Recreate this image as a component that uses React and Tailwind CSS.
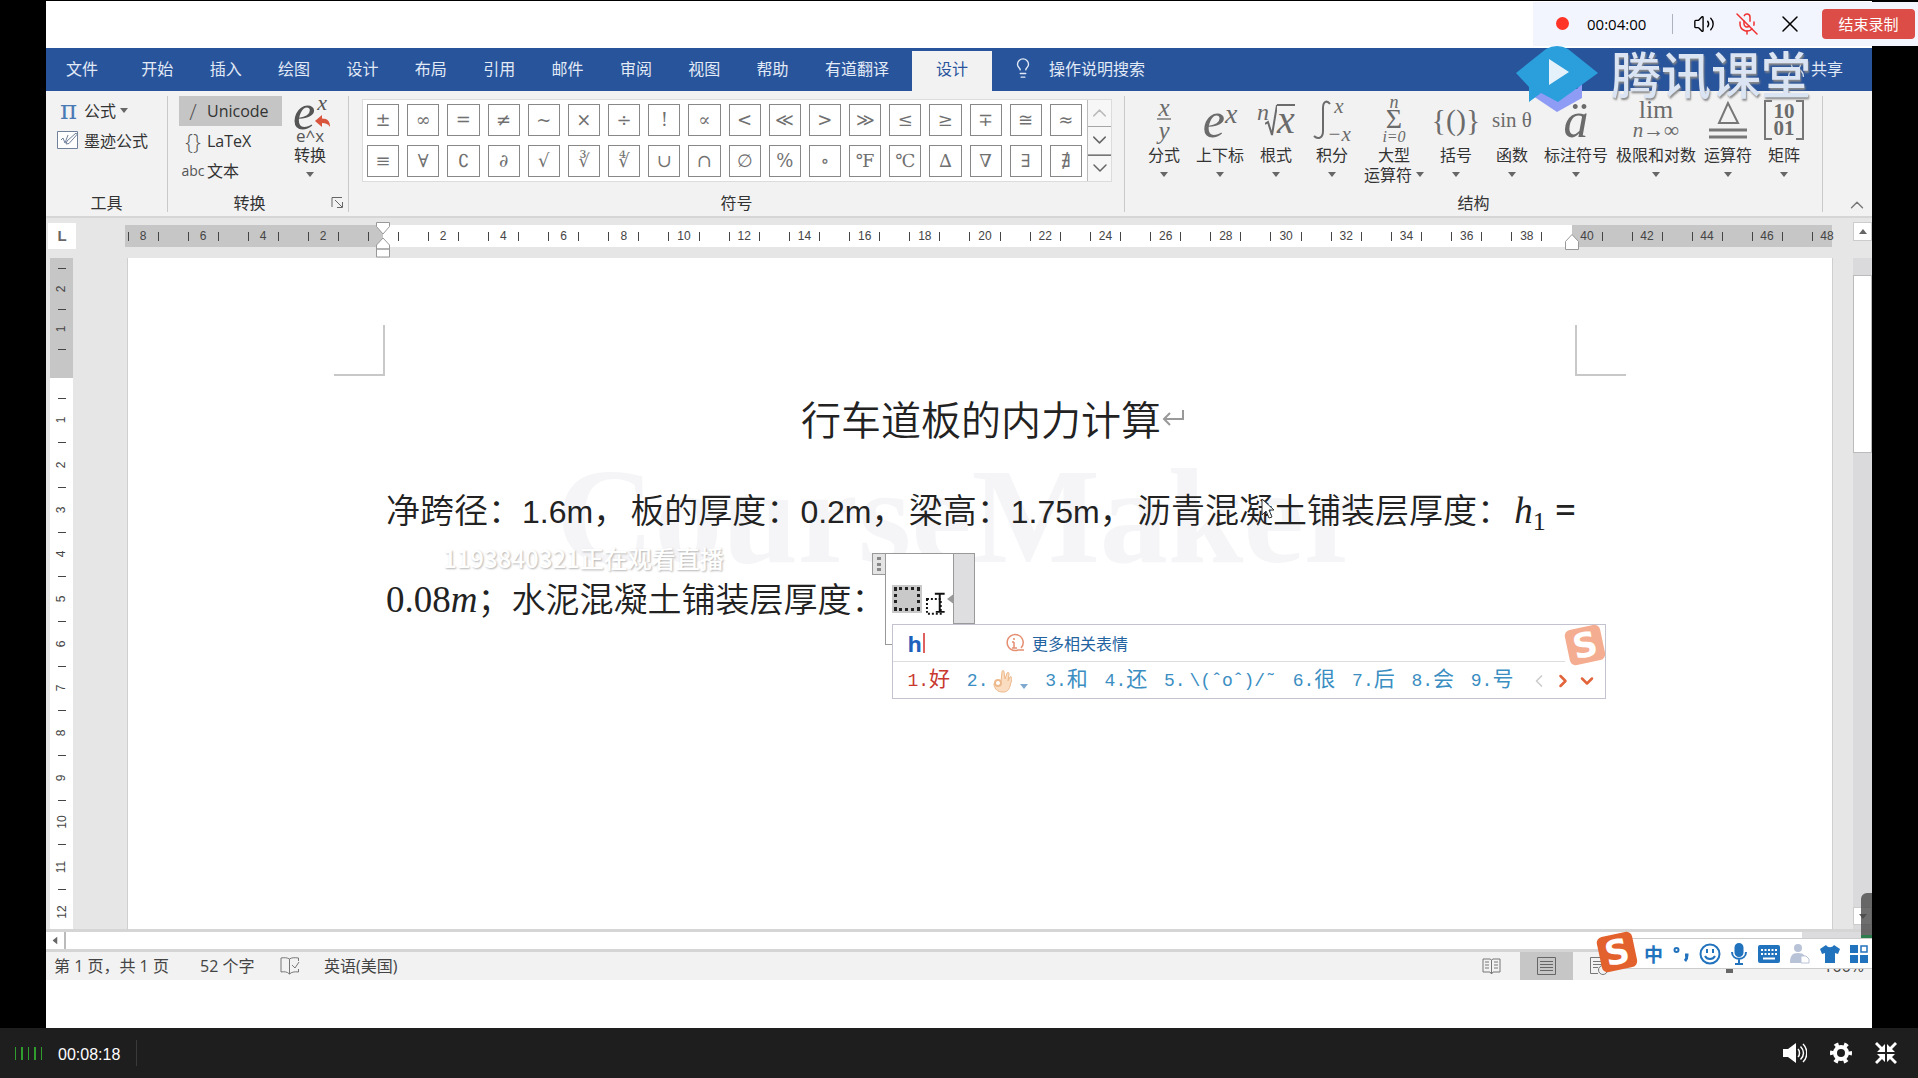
import { useState } from 'react';
import { ChevronDown, ChevronLeft, ChevronRight, ChevronUp, Lightbulb, MicOff, UserRound, Volume2, X } from 'lucide-react';

const MENU = ['开始', '插入', '绘图', '设计', '布局', '引用', '邮件', '审阅', '视图', '帮助', '有道翻译'];

const SYMBOLS = [
    '±', '∞', '=', '≠', '~', '×', '÷', '!', '∝', '<', '≪', '>', '≫', '≤', '≥', '∓', '≅', '≈',
    '≡', '∀', '∁', '∂', '√', '∛', '∜', '∪', '∩', '∅', '%', '∘', '℉', '℃', '∆', '∇', '∃', '∄',
];

const CANDIDATES = ['好', '👌', '和', '还', '\\(ˆoˆ)/˜', '很', '后', '会', '号'];

const Caret = () => (
    <svg width="8" height="5" viewBox="0 0 8 5" className="shrink-0" aria-hidden="true">
        <path d="M0 0h8L4 5z" fill="#666" />
    </svg>
);

const SogouLogo = ({ faded }) => (
    <span
        className={`flex h-9 w-9 shrink-0 -rotate-12 items-center justify-center rounded-md font-['DejaVu_Sans',sans-serif] text-[34px] leading-none font-bold text-white ${faded ? 'bg-[#f4ad91]' : 'bg-[#e3612c]'}`}
    >
        S
    </span>
);

const RibbonGroup = ({ title, className, launcher, children }) => (
    <section className={`flex flex-col border-r border-[#c9c9c9] ${className}`}>
        <div className="flex h-24">{children}</div>
        <div className="flex h-5 items-center">
            <h2 className="flex-1 text-center leading-5">{title}</h2>
            {launcher && (
                <button aria-label="转换选项" className="mr-1">
                    <svg width="13" height="13" viewBox="0 0 13 13" fill="none" stroke="#666">
                        <path d="M1 11V1.500h10M4 4l7 7M11.500 6v5.500H6" />
                    </svg>
                </button>
            )}
        </div>
    </section>
);

const Structure = ({ label, width = 'w-14', children }) => (
    <button className={`flex flex-col items-center ${width}`}>
        <span className="flex h-12 items-center justify-center font-['Liberation_Serif',serif] text-[#6b6b6b]">{children}</span>
        <span className="leading-5 whitespace-nowrap">{label}</span>
        <span className="flex h-5 items-center"><Caret /></span>
    </button>
);

const Tick = () => <span className="h-[9px] w-px bg-[#444]" />;

const RulerCell = ({ value, first = true, last = true }) => (
    <span className="flex min-w-0 flex-[2_2_0%] items-center">
        <span className="flex flex-1 justify-center">{first && <Tick />}</span>
        <span className="w-0 flex justify-center">{value}</span>
        <span className="flex flex-1 justify-center">{last && <Tick />}</span>
    </span>
);

const Ruler = () => (
    <div className="flex h-10 items-start bg-[#e6e6e7] pt-[7px] text-[12px] font-['Liberation_Sans',sans-serif] text-[#444]">
        <div className="-mt-[2px] ml-[2px] flex h-[26px] w-7 items-center justify-center bg-white text-[15px] font-bold text-[#666]">L</div>
        <div className="ml-[49px] flex h-[22px] w-[258px] justify-end overflow-hidden bg-[#c6c6c6]">
            <div className="flex w-[270px] shrink-0">
                {[8, 6, 4, 2].map((n) => <RulerCell key={n} value={n} />)}
                <span className="flex flex-1 items-center justify-center"><Tick /></span>
            </div>
        </div>
        <div className="relative flex h-[22px] flex-1 bg-white">
            <svg width="16" height="38" viewBox="0 0 16 38" className="absolute -top-1 -left-2" fill="#fff" stroke="#999">
                <path d="M1.500 1.500h13v4L8 13 1.500 5.500zM8 17l6.500 7v4h-13v-4zM1.500 28h13v8h-13z" />
            </svg>
            <span className="flex flex-[1_1_0%] items-center justify-center"><Tick /></span>
            {Array.from({ length: 19 }, (_, i) => <RulerCell key={i} value={i * 2 + 2} />)}
            <span className="flex-[0.5_0.5_0%]" />
            <svg width="16" height="18" viewBox="0 0 16 18" className="absolute top-2 -right-2 z-10" fill="#fff" stroke="#999">
                <path d="M8 1.500l6.500 7v8h-13v-8z" />
            </svg>
        </div>
        <div className="flex h-[22px] w-[260px] bg-[#c6c6c6]">
            <div className="-ml-[15px] flex w-[300px] shrink-0">
                {[40, 42, 44, 46, 48].map((n) => <RulerCell key={n} value={n} first={n > 40} last={n < 48} />)}
            </div>
        </div>
        <div className="w-[40px]" />
    </div>
);

const VerticalMarks = ({ values, className }) => (
    <div className={`flex flex-col ${className}`}>
        {values.map((v, i) => (
            <span key={i} className="flex min-h-0 flex-1 items-center justify-center">
                {v === null ? <i className="h-px w-2 bg-[#444]" /> : <span className="-rotate-90 leading-none">{v}</span>}
            </span>
        ))}
    </div>
);

const Ribbon = () => {
    const [format, setFormat] = useState('Unicode');
    const formats = [
        { id: 'Unicode', icon: '/' },
        { id: 'LaTeX', icon: '{}' },
        { id: '文本', icon: 'abc' },
    ];

    return (
        <div className="flex border-b-2 border-[#d6d6d6] bg-[#f2f2f2] pt-[5px] pb-1 text-[#333]">
            <RibbonGroup title="工具" className="w-[122px]">
                <div className="flex flex-col items-start pl-[10px]">
                    <button className="flex h-7 items-center">
                        <span className="w-7 pl-1 text-left font-['DejaVu_Serif',serif] text-[26px] leading-none text-[#4a7ab5]">π</span>
                        公式
                        <span className="ml-1"><Caret /></span>
                    </button>
                    <button className="flex h-8 items-center">
                        <svg width="24" height="20" viewBox="0 0 24 20" className="mr-1" fill="none" stroke="#71819a">
                            <path d="M1.500 1.500h20v17h-20z" fill="#fff" />
                            <path d="M5 10l2-2 2 5 3-8M10 14l1-3 9-8 1 1.500-8 9z" />
                        </svg>
                        墨迹公式
                    </button>
                </div>
            </RibbonGroup>

            <RibbonGroup title="转换" className="w-[181px]" launcher>
                <div className="ml-[11px] flex w-[103px] flex-col">
                    {formats.map((f) => (
                        <button
                            key={f.id}
                            onClick={() => setFormat(f.id)}
                            className={`flex h-[30px] items-center font-['Open_Sans','Noto_Sans_CJK_SC',sans-serif] ${format === f.id ? 'bg-[#c5c5c5]' : ''}`}
                        >
                            <span className={`w-7 text-center text-[#555] ${f.icon === 'abc' ? 'text-[14px]' : 'text-[22px] leading-5 font-light'}`}>{f.icon}</span>
                            {f.id}
                        </button>
                    ))}
                </div>
                <button className="flex w-14 flex-col items-center">
                    <span className="relative flex h-8 items-center pr-3 font-['Liberation_Serif',serif] text-[50px] leading-none text-[#555] italic">
                        e
                        <span className="absolute -top-1 right-0 text-[22px]">x</span>
                        <svg width="16" height="13" viewBox="0 0 16 13" className="absolute right-[-4px] bottom-0">
                            <path d="M0 6l7-6v3.500c6 0 8 3 8 8.500-2-3-4-4-8-4V12z" fill="#d9543c" />
                        </svg>
                    </span>
                    <span className="h-4 font-['Open_Sans',sans-serif] text-[17px] leading-4 text-[#555]">e^x</span>
                    <span className="leading-5">转换</span>
                    <span className="flex h-5 items-center"><Caret /></span>
                </button>
            </RibbonGroup>

            <RibbonGroup title="符号" className="min-w-0 flex-1">
                <div className="mt-[3px] ml-[13px] flex h-[83px] flex-1 border border-[#dcdcdc] bg-white">
                    <div className="grid flex-1 grid-cols-[repeat(18,minmax(0,1fr))] gap-x-2 gap-y-[9px] p-1 pr-[5px]">
                        {SYMBOLS.map((s) => (
                            <button key={s} className="flex items-center justify-center border border-[#888] font-['DejaVu_Serif',serif] text-[18px] leading-none text-[#707070]">
                                {s}
                            </button>
                        ))}
                    </div>
                    <div className="flex w-6 flex-col divide-y divide-[#a5a5a5] border-l border-[#bbb] bg-[#f7f7f7]">
                        <button aria-label="上一行" className="flex flex-1 items-center justify-center text-[#bbb]"><ChevronUp size={24} strokeWidth={1.5} /></button>
                        <button aria-label="下一行" className="flex flex-1 items-center justify-center text-[#666]"><ChevronDown size={24} strokeWidth={1.5} /></button>
                        <button aria-label="其他" className="flex flex-1 flex-col items-center justify-center text-[#666]">
                            <i className="h-px w-full bg-[#777]" />
                            <ChevronDown size={24} strokeWidth={1.5} />
                        </button>
                    </div>
                </div>
                <div className="w-3" />
            </RibbonGroup>

            <RibbonGroup title="结构" className="w-[698px]">
                <div className="flex pl-[11px]">
                    <Structure label="分式">
                        <span className="flex flex-col items-center text-[25px] leading-[22px] italic">
                            <span className="border-b-2 border-[#999] px-px leading-5">x</span>
                            <span>y</span>
                        </span>
                    </Structure>
                    <Structure label="上下标">
                        <span className="text-[50px] leading-none italic">e<sup className="text-[28px]">x</sup></span>
                    </Structure>
                    <Structure label="根式">
                        <span className="flex items-center italic">
                            <span className="-mr-1 self-start text-[24px] leading-5">n</span>
                            <svg width="12" height="36" viewBox="0 0 12 36" fill="none" stroke="#6b6b6b" strokeWidth="2">
                                <path d="M0 22l3-2 4 13L12 3" />
                            </svg>
                            <span className="h-8 border-t-2 border-[#6b6b6b] text-[40px] leading-7">x</span>
                        </span>
                    </Structure>
                    <Structure label="积分">
                        <span className="flex items-center italic">
                            <svg width="18" height="42" viewBox="0 0 18 42" fill="none" stroke="#6b6b6b" strokeWidth="2">
                                <path d="M17 5c-3-4-7-3-7 4v23c0 7-5 9-9 5" />
                            </svg>
                            <span className="-ml-1 flex h-11 flex-col justify-between text-[21px] leading-4">
                                <span className="text-center">x</span>
                                <span>−x</span>
                            </span>
                        </span>
                    </Structure>
                    <button className="flex w-[68px] flex-col items-center">
                        <span className="flex h-12 flex-col items-center justify-center font-['Liberation_Serif',serif] text-[#6b6b6b]">
                            <i className="text-[18px] leading-[10px]">n</i>
                            <span className="text-[28px] leading-6">Σ</span>
                            <i className="text-[16px] leading-3">i=0</i>
                        </span>
                        <span className="leading-5">大型</span>
                        <span className="flex items-center gap-1 leading-5 whitespace-nowrap">运算符<Caret /></span>
                    </button>
                    <Structure label="括号"><span className="text-[30px]">{'{()}'}</span></Structure>
                    <Structure label="函数"><span className="text-[21px] whitespace-nowrap">sin θ</span></Structure>
                    <Structure label="标注符号" width="w-[72px]"><i className="text-[50px] leading-none">ä</i></Structure>
                    <Structure label="极限和对数" width="w-[88px]">
                        <span className="flex flex-col items-center">
                            <span className="text-[26px] leading-5">lim</span>
                            <i className="text-[21px] leading-5">n→∞</i>
                        </span>
                    </Structure>
                    <Structure label="运算符">
                        <svg width="40" height="40" viewBox="0 0 40 40" fill="none" stroke="#777" strokeWidth="3">
                            <path d="M20 3l-9 20h19z" strokeWidth="2" />
                            <path d="M1 30h38M1 37h38" />
                        </svg>
                    </Structure>
                    <Structure label="矩阵">
                        <span className="relative flex h-10 w-10 flex-col items-center justify-center text-[21px] leading-[17px] font-bold">
                            <svg width="40" height="40" viewBox="0 0 40 40" className="absolute inset-0" fill="none" stroke="#777" strokeWidth="2">
                                <path d="M8 1H1v38h7M32 1h7v38h-7" />
                            </svg>
                            <span>10</span>
                            <span>01</span>
                        </span>
                    </Structure>
                </div>
            </RibbonGroup>
            <div className="flex w-[49px] items-end justify-end pr-1">
                <button aria-label="折叠功能区" className="-mb-1 text-[#777]"><ChevronUp size={22} strokeWidth={1.5} /></button>
            </div>
        </div>
    );
};

const InputMethod = () => (
    <div className="absolute top-[71px] left-[7px] z-10 w-[714px] border border-[#c3c3cf] bg-white font-['Liberation_Mono','Noto_Sans_CJK_SC',monospace] text-[#3b8ec2]">
        <div className="flex h-9 items-center pl-[14px]">
            <span className="border-r-2 border-[#e06060] pr-px font-['Open_Sans',sans-serif] text-[22px] leading-5 font-bold text-[#1c62bd]">h</span>
            <svg width="22" height="20" viewBox="0 0 22 20" className="ml-[79px]" fill="none" stroke="#e58f72" strokeWidth="1.500">
                <path d="M17 15a8 8 0 1 0-3 2h6M10 9v6M8 9h2M8 15h5M10 5v2" />
            </svg>
            <span className="ml-[6px] font-['Noto_Sans_CJK_SC',sans-serif] text-[16px] text-[#23639f]">更多相关表情</span>
        </div>
        <div className="mr-10 border-t border-[#ddd]" />
        <div className="flex h-9 items-center pt-px pl-[14px] text-[21px]">
            <ol className="flex flex-1 justify-between">
                {CANDIDATES.map((c, i) => (
                    <li key={c} className={`flex items-center leading-7 ${i === 0 ? 'text-[#c8382f]' : ''}`}>
                        <span className="text-[18px]">{i + 1}.</span>
                        {i === 1 ? (
                            <>
                                <svg width="20" height="24" viewBox="0 0 20 24" className="ml-1" fill="#fadcc0" stroke="#edb98c">
                                    <path d="M9 12L10 3c0-2 2-2 2 0l1 7 2-6c1-1 2-1 2 1l-1 7 2-4c1-1 2 0 2 2l-2 7c-1 4-3 6-7 6-6 0-8-3-9-7 0-4 3-5 7-4z" />
                                    <circle cx="6" cy="14" r="3" fill="#fff" strokeWidth="2" />
                                </svg>
                                <svg width="8" height="5" viewBox="0 0 8 5" className="mt-3 ml-2"><path d="M0 0h8L4 5z" fill="#7fa9cf" /></svg>
                            </>
                        ) : (
                            <span className={i === 4 ? 'ml-1 text-[18px]' : ''}>{c}</span>
                        )}
                    </li>
                ))}
            </ol>
            <div className="flex gap-1 pr-2 pl-4">
                <button aria-label="上一页" className="text-[#ccc]"><ChevronLeft size={20} /></button>
                <button aria-label="下一页" className="text-[#e2643a]"><ChevronRight size={20} strokeWidth={3} /></button>
                <button aria-label="展开" className="text-[#e2643a]"><ChevronDown size={20} strokeWidth={3} /></button>
            </div>
        </div>
        <div className="absolute top-[2px] right-[2px]"><SogouLogo faded /></div>
    </div>
);

const EquationBox = () => (
    <div className="relative h-[92px] w-[90px]">
        <div className="absolute top-0 -left-[13px] flex h-[22px] w-[14px] flex-col items-center justify-evenly border border-[#999] bg-[#e4e4e4]">
            <i className="h-[3px] w-1 bg-[#888]" />
            <i className="h-[3px] w-1 bg-[#888]" />
            <i className="h-[3px] w-1 bg-[#888]" />
        </div>
        <div className="flex h-full w-[69px] items-center border border-r-0 border-[#999] bg-white pl-[6px]">
            <span className="flex h-[28px] w-[30px] items-center justify-center bg-[#c9c9c9]">
                <i className="h-6 w-[26px] border-[3px] border-dotted border-[#222]" />
            </span>
            <svg width="20" height="26" viewBox="0 0 20 26" className="mt-3 ml-[3px]" fill="none" stroke="#111" strokeWidth="2">
                <path d="M2 7h14v15H2z" strokeDasharray="2 2" />
                <path d="M15 2v18M10 1.500h10M11 20h9" />
            </svg>
            <svg width="8" height="12" viewBox="0 0 8 12" className="ml-[2px]"><path d="M8 0v12L0 6z" fill="#999" /></svg>
        </div>
        <div className="absolute top-0 right-0 h-[71px] w-[22px] border border-[#999] bg-[#dedee0]" />
        <InputMethod />
    </div>
);

const Latin = ({ children }) => <span className="font-['Liberation_Sans',sans-serif] text-[32px]">{children}</span>;

const Document = () => (
    <div className="flex flex-1 bg-[#e6e6e7]">
        <div className="ml-1 flex w-[23px] flex-col text-[12px] font-['Liberation_Sans',sans-serif] text-[#444]">
            <VerticalMarks values={[null, 2, null, 1, null]} className="h-[120px] bg-[#c6c6c6] pb-[18px]" />
            <VerticalMarks
                values={Array.from({ length: 24 }, (_, i) => (i % 2 ? (i + 1) / 2 : null))}
                className="flex-1 bg-white pt-[9px] pb-[6px]"
            />
        </div>
        <main className="relative mr-5 ml-[54px] flex-1 border-x border-[#cfcfcf] bg-white pt-[67px] font-['Noto_Sans_CJK_SC',sans-serif] text-[#222]">
            <div className="absolute top-[193px] left-[428px] font-['Liberation_Serif',serif] text-[136px] leading-[130px] font-bold text-[#f5f5f8]">CourseMaker</div>
            <div className="absolute top-[285px] left-[315px] text-[24px] leading-[30px] font-medium text-white text-shadow-[1px_1px_2px_#b4b4b4]">1193840321正在观看直播</div>

            <div className="flex justify-between px-[206px]">
                <i className="h-[51px] w-[51px] border-r-2 border-b-2 border-[#c8c8c8]" />
                <i className="h-[51px] w-[51px] border-b-2 border-l-2 border-[#c8c8c8]" />
            </div>

            <h1 className="relative mt-3 flex h-[60px] items-center justify-center pl-[26px] text-[40px] leading-[60px] font-[350]">
                行车道板的内力计算
                <svg width="24" height="18" viewBox="0 0 24 18" fill="none" stroke="#999" strokeWidth="2">
                    <path d="M22 1v9H3M9 4l-6 6 6 6" />
                </svg>
            </h1>

            <div className="relative mt-[17px] pr-[256px] pl-[258px] text-[34px] font-[350] whitespace-nowrap">
                <p className="flex h-[88px] items-baseline justify-between leading-[88px]">
                    <span>净跨径：<Latin>1.6m</Latin>，</span>
                    <span>板的厚度：<Latin>0.2m</Latin>，</span>
                    <span>梁高：<Latin>1.75m</Latin>，</span>
                    <span>沥青混凝土铺装层厚度：</span>
                    <span className="font-['Liberation_Serif',serif] text-[37px] font-normal">
                        <i>h</i><sub className="text-[26px]">1</sub> <b>=</b>
                    </span>
                </p>
                <div className="flex items-center">
                    <p className="leading-[90px]">
                        <span className="font-['Liberation_Serif',serif] text-[37px] font-normal">0.08<i>m</i></span>
                        ；水泥混凝土铺装层厚度：
                    </p>
                    <div className="text-[16px] font-normal"><EquationBox /></div>
                </div>
            </div>

            <svg width="14" height="21" viewBox="0 0 14 21" className="absolute top-[240px] left-[1133px]" fill="#fff" stroke="#333">
                <path d="M1 1v16l4-4 3 7 3-1-3-7h5z" />
            </svg>
        </main>
        <div className="flex w-[19px] flex-col bg-[#dad9db]">
            <button aria-label="向上滚动" className="-mt-9 flex h-[19px] items-center justify-center border border-[#ccc] bg-white">
                <span className="rotate-180"><Caret /></span>
            </button>
            <div className="mt-[34px] h-[178px] border border-[#bbb] bg-white" />
            <button aria-label="向下滚动" className="mt-auto mb-1 flex h-[18px] items-center justify-center border border-[#ccc] bg-white"><Caret /></button>
        </div>
    </div>
);

const InputToolbar = () => (
    <div className="absolute right-0 bottom-[59px] flex h-[31px] w-[264px] items-center justify-between border-y border-[#ccc] bg-white pr-1 pl-[36px] text-[#2273bd]">
        <div className="absolute -top-[5px] -left-[9px]"><SogouLogo /></div>
        <button className="text-[19px] leading-5 font-bold">中</button>
        <button aria-label="标点">
            <svg width="16" height="18" viewBox="0 0 16 18" fill="none" stroke="currentColor" strokeWidth="2">
                <circle cx="3.500" cy="5" r="2" />
                <path d="M12 10h2c0 3 0 4-2 6" strokeWidth="3" />
            </svg>
        </button>
        <button aria-label="表情">
            <svg width="22" height="22" viewBox="0 0 22 22" fill="none" stroke="currentColor" strokeWidth="2">
                <circle cx="11" cy="11" r="9.500" />
                <path d="M8 6v4M14 6v4M6 13c2 4 8 4 10 0" />
            </svg>
        </button>
        <button aria-label="语音">
            <svg width="16" height="22" viewBox="0 0 16 22" fill="none" stroke="currentColor" strokeWidth="2">
                <rect x="4.500" y="1" width="7" height="12" rx="3.500" fill="currentColor" />
                <path d="M1 9c0 9 14 9 14 0M8 16v5M4 21h8" />
            </svg>
        </button>
        <button aria-label="键盘">
            <svg width="22" height="18" viewBox="0 0 22 18">
                <rect width="22" height="18" rx="2" fill="currentColor" />
                <path d="M3 5h16M3 9h16" stroke="#fff" strokeWidth="2" strokeDasharray="2 1.500" />
                <path d="M5 13.500h12" stroke="#fff" strokeWidth="2" />
            </svg>
        </button>
        <button aria-label="账户">
            <svg width="20" height="20" viewBox="0 0 20 20" fill="#b9c3d8">
                <circle cx="8" cy="4" r="4" />
                <path d="M0 19c0-7 2-10 8-10s7 3 7 5v5z" />
                <path d="M11 12h5l3 3v4h-8z" fill="#fff" stroke="#b9c3d8" />
            </svg>
        </button>
        <button aria-label="皮肤">
            <svg width="20" height="20" viewBox="0 0 20 20" fill="currentColor">
                <path d="M6 1c2 3 6 3 8 0l6 4-2 5-3-1v10H5V9l-3 1-2-5z" />
            </svg>
        </button>
        <button aria-label="工具箱">
            <svg width="18" height="18" viewBox="0 0 18 18" fill="currentColor">
                <path d="M0 0h8v8H0zM0 10h8v8H0zM10 10h8v8h-8z" />
                <path d="M11 1h6v6h-6z" fill="none" stroke="currentColor" strokeWidth="1.500" />
            </svg>
        </button>
    </div>
);

const StatusBar = () => (
    <footer className="flex h-7 items-center bg-[#f2f2f2] pl-2 font-['Open_Sans','Noto_Sans_CJK_SC',sans-serif] text-[16px] text-[#444]">
        <span className="w-[146px]">第 1 页，共 1 页</span>
        <span className="w-20">52 个字</span>
        <svg width="20" height="18" viewBox="0 0 20 18" fill="none" stroke="#777">
            <path d="M9.500 2C7 .5 4 .5 1 1v14c3-.5 6-.5 8.500 2zM9.500 2c2-1.500 5-1.500 9-1v3M9.500 17c2-2 5-2.500 9-2v-3M12 8l3 3 4-6" />
        </svg>
        <span className="ml-6">英语(美国)</span>
        <div className="ml-auto flex h-full items-center">
            <button aria-label="阅读视图" className="mr-[19px]">
                <svg width="19" height="17" viewBox="0 0 19 17" fill="none" stroke="#777">
                    <path d="M1 1h7l1.500 1L11 1h7v13h-7l-1.500 2L8 14H1zM9.500 2v14M3 4h4M3 7h4M3 10h4M12 4h4M12 7h4M12 10h4" />
                </svg>
            </button>
            <button aria-label="页面视图" className="flex h-full w-[53px] items-center justify-center bg-[#c6c6c6]">
                <svg width="19" height="18" viewBox="0 0 19 18" fill="none" stroke="#666">
                    <path d="M.5.5h18v17H.5zM3 4.500h13M3 7.500h13M3 10.500h13M3 13.500h13" />
                </svg>
            </button>
            <button aria-label="Web 视图" className="ml-[17px]">
                <svg width="19" height="18" viewBox="0 0 19 18" fill="none" stroke="#777">
                    <path d="M8 16.500H.5v-16h15V8M3 4.500h9M3 7.500h9M3 10.500h5" />
                    <circle cx="13" cy="13" r="4.500" />
                </svg>
            </button>
            <input
                type="range"
                aria-label="显示比例"
                defaultValue="50"
                className="ml-10 h-4 w-[160px] appearance-none bg-transparent [&::-webkit-slider-thumb]:h-[14px] [&::-webkit-slider-thumb]:w-[7px] [&::-webkit-slider-thumb]:appearance-none [&::-webkit-slider-thumb]:bg-[#666]"
            />
            <span className="mr-2 ml-[14px]">100%</span>
        </div>
    </footer>
);

const RecorderBar = () => (
    <div className="absolute top-[2px] right-0 z-20 flex h-11 w-[385px] items-center bg-[#f3f5fe] pb-px text-black">
        <i className="ml-[23px] h-[13px] w-[13px] rounded-full bg-[#ff3326]" />
        <time className="ml-[18px] w-[85px] font-['Open_Sans',sans-serif] text-[15px]">00:04:00</time>
        <i className="h-5 w-px bg-[#aeb2bd]" />
        <button aria-label="声音" className="ml-5"><Volume2 size={22} strokeWidth={1.5} /></button>
        <button aria-label="麦克风" className="ml-5 text-[#f03030]"><MicOff size={24} strokeWidth={1.5} /></button>
        <button aria-label="关闭" className="ml-[17px]"><X size={28} strokeWidth={1.25} /></button>
        <button className="mr-[3px] ml-auto h-[30px] w-[93px] rounded bg-[#dc4d48] text-[15px] text-white">结束录制</button>
    </div>
);

const ClassroomLogo = () => (
    <div className="absolute top-[44px] right-[61px] z-10 flex h-[68px] items-start gap-3">
        <svg width="84" height="68" viewBox="0 0 84 68">
            <path d="M18 51l14-7 30 0 5-6v15L42 67z" fill="#8f9cf5" />
            <path d="M31 4q11-6 22 0l30 24-40 29-17-9-12 9V42L1 28z" fill="#2a9fdb" />
            <path d="M34 14l20 13-20 13z" fill="#e4f1fa" />
        </svg>
        <span className="-mt-[3px] text-[50px] leading-[60px] font-medium text-[#dbe4f2] text-shadow-[1px_2px_2px_#8a8a8a]">腾讯课堂</span>
    </div>
);

const PlayerBar = () => (
    <div className="flex h-[50px] items-center bg-[#1e1e1e] px-[15px] text-white">
        <div className="flex h-[13px] gap-[5px]">
            {[0, 1, 2, 3, 4].map((n) => <i key={n} className={`bg-[#2f9e2f] ${n % 2 ? 'w-[2px]' : 'w-px'}`} />)}
        </div>
        <time className="ml-4 pt-1 font-['Liberation_Sans',sans-serif] text-[16px] leading-5">00:08:18</time>
        <i className="ml-4 h-[26px] w-px bg-[#3a3a3a]" />
        <div className="ml-auto flex items-center gap-[23px] pr-[6px]">
            <button aria-label="音量">
                <svg width="24" height="20" viewBox="0 0 24 20" fill="#fff">
                    <path d="M0 6h5l8-6v20l-8-6H0z" />
                    <path d="M15 6c2 2 2 6 0 8M17.500 3.500c4 4 4 9 0 13M20 1c5 5 5 13 0 18" fill="none" stroke="#fff" strokeWidth="1.500" />
                </svg>
            </button>
            <button aria-label="设置">
                <svg width="22" height="22" viewBox="0 0 22 22" fill="none" stroke="#fff">
                    <circle cx="11" cy="11" r="6" strokeWidth="4" />
                    <circle cx="11" cy="11" r="9" strokeWidth="4" strokeDasharray="4 5.425" strokeDashoffset="2" />
                </svg>
            </button>
            <button aria-label="退出全屏">
                <svg width="22" height="22" viewBox="0 0 22 22" fill="#fff">
                    <path d="M10 10H2l3-3-5-5 2-2 5 5 3-3zM12 10V2l3 3 5-5 2 2-5 5 3 3zM10 12v8l-3-3-5 5-2-2 5-5-3-3zM12 12h8l-3 3 5 5-2 2-5-5-3 3z" />
                </svg>
            </button>
        </div>
    </div>
);

const App = () => (
    <div className="relative flex min-h-screen flex-col bg-black font-['Noto_Sans_CJK_SC',sans-serif] text-[16px] leading-5">
        <RecorderBar />
        <div className="relative mx-[46px] mt-px flex flex-1 flex-col bg-white">
            <ClassroomLogo />
            <header className="mt-[47px] flex h-[43px] items-center bg-[#28549c] text-[#e2eaf6]">
                <nav className="flex w-[843px] justify-between pb-1 pl-5">
                    <button className="mr-[7px]">文件</button>
                    {MENU.map((m, i) => <button key={i}>{m}</button>)}
                </nav>
                <button className="mt-[3px] ml-[23px] h-10 w-20 bg-[#f2f2f2] pb-[7px] text-[#28549c]">设计</button>
                <button className="ml-5 flex items-center gap-[15px] pb-1">
                    <Lightbulb size={22} strokeWidth={1.5} />
                    操作说明搜索
                </button>
                <button className="mr-[29px] ml-auto flex items-center gap-1 pb-1"><UserRound size={22} strokeWidth={1.5} />共享</button>
            </header>
            <Ribbon />
            <Ruler />
            <Document />
            <div className="flex h-[23px] border-y-[3px] border-[#d5d5d5] bg-white">
                <button aria-label="向左滚动" className="flex w-5 items-center justify-center border-r-2 border-[#bbb]">
                    <span className="rotate-90"><Caret /></span>
                </button>
                <div className="ml-auto w-[70px] bg-[#dcdcde]" />
            </div>
            <StatusBar />
            <div className="h-12 bg-white" />
            <div className="absolute right-0 bottom-[89px] h-[46px] w-[11px] rounded-tl-md border-b-4 border-[#2e7d4f] bg-[#4a4a4a]/80" />
            <InputToolbar />
        </div>
        <PlayerBar />
    </div>
);

export default App;
